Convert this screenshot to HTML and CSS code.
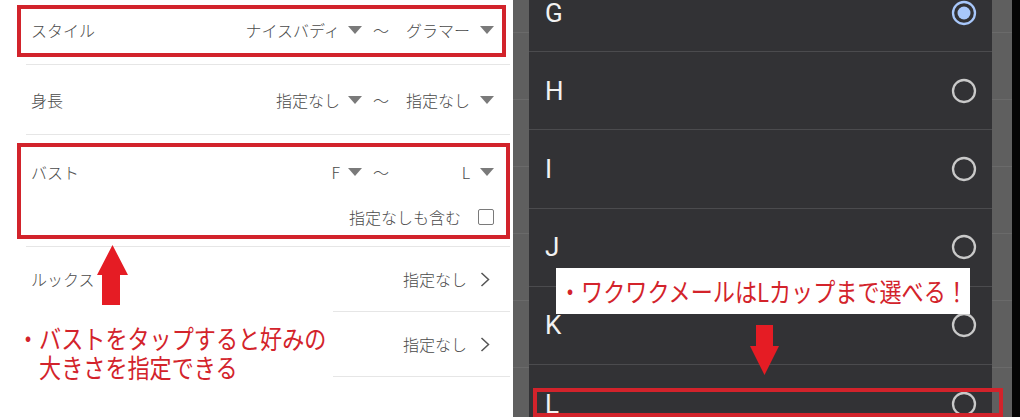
FILE: index.html
```html
<!DOCTYPE html>
<html lang="ja">
<head>
<meta charset="utf-8">
<title>検索条件</title>
<link rel="stylesheet" href="styles.css">
</head>
<body>
<div class="page">
  <section class="left">
    <div class="list">
      <div class="row">
        <span class="label">スタイル</span>
        <div class="range">
          <span class="sel">ナイスバディ<i class="tri"></i></span>
          <span class="tilde">〜</span>
          <span class="sel sel2">グラマー<i class="tri"></i></span>
        </div>
      </div>
      <div class="row">
        <span class="label">身長</span>
        <div class="range">
          <span class="sel">指定なし<i class="tri"></i></span>
          <span class="tilde">〜</span>
          <span class="sel sel2">指定なし<i class="tri"></i></span>
        </div>
      </div>
      <div class="row row-bust">
        <div class="line1">
          <span class="label">バスト</span>
          <div class="range">
            <span class="sel">F<i class="tri"></i></span>
            <span class="tilde">〜</span>
            <span class="sel sel2">L<i class="tri"></i></span>
          </div>
        </div>
        <div class="line2">
          <span class="value">指定なしも含む</span>
          <span class="checkbox"></span>
        </div>
      </div>
      <div class="row row-short">
        <span class="label">ルックス</span>
        <span class="link">指定なし<svg class="chev" viewBox="0 0 10 15" width="10" height="15"><polyline points="1.5,1 8.5,7.5 1.5,14" fill="none" stroke="#555" stroke-width="1.5"/></svg></span>
      </div>
      <div class="row row-short">
        <span class="label"></span>
        <span class="link">指定なし<svg class="chev" viewBox="0 0 10 15" width="10" height="15"><polyline points="1.5,1 8.5,7.5 1.5,14" fill="none" stroke="#555" stroke-width="1.5"/></svg></span>
      </div>
    </div>

    <div class="hl hl-style"></div>
    <div class="hl hl-bust"></div>
    <svg class="arrow-up" viewBox="0 0 31 60" width="31" height="60"><polygon points="15.5,0 31,30 23,30 23,60 5,60 5,30 0,30" fill="#e51c24"/></svg>
    <div class="note-left">
      <span class="note-line">・バストをタップすると好みの</span>
      <span class="note-line">　大きさを指定できる</span>
    </div>
  </section>

  <section class="right">
    <div class="dim"></div>
    <div class="dialog">
      <div class="opt"><span class="opt-label">G</span><svg class="radio" viewBox="0 0 26 26" width="26" height="26"><circle cx="13" cy="13" r="11" fill="none" stroke="#a8c7fa" stroke-width="2.3"/><circle cx="13" cy="13" r="6.5" fill="#a8c7fa"/></svg></div>
      <div class="opt"><span class="opt-label">H</span><svg class="radio" viewBox="0 0 26 26" width="26" height="26"><circle cx="13" cy="13" r="11" fill="none" stroke="#c9c9c9" stroke-width="2.3"/></svg></div>
      <div class="opt"><span class="opt-label">I</span><svg class="radio" viewBox="0 0 26 26" width="26" height="26"><circle cx="13" cy="13" r="11" fill="none" stroke="#c9c9c9" stroke-width="2.3"/></svg></div>
      <div class="opt"><span class="opt-label">J</span><svg class="radio" viewBox="0 0 26 26" width="26" height="26"><circle cx="13" cy="13" r="11" fill="none" stroke="#c9c9c9" stroke-width="2.3"/></svg></div>
      <div class="opt"><span class="opt-label">K</span><svg class="radio" viewBox="0 0 26 26" width="26" height="26"><circle cx="13" cy="13" r="11" fill="none" stroke="#c9c9c9" stroke-width="2.3"/></svg></div>
      <div class="opt"><span class="opt-label">L</span><svg class="radio" viewBox="0 0 26 26" width="26" height="26"><circle cx="13" cy="13" r="11" fill="none" stroke="#c9c9c9" stroke-width="2.3"/></svg></div>
    </div>
    <div class="dim dim-r"></div>
    <div class="edge"></div>

    <div class="note-right"><span class="note-text">・ワクワクメールはLカップまで選べる！</span></div>
    <svg class="arrow-down" viewBox="0 0 29 50" width="29" height="50"><polygon points="6,0 23,0 23,21 29,21 14.5,50 0,21 6,21" fill="#e51c24"/></svg>
    <div class="hl hl-l"></div>
  </section>
</div>
</body>
</html>
```
FILE: styles.css
```css
* { box-sizing: border-box; }

html, body {
  margin: 0;
  padding: 0;
  background: #ffffff;
}

body {
  font-family: "Noto Sans CJK JP", "Noto Sans", sans-serif;
  color: #555;
}

.page {
  display: flex;
  width: 1020px;
  height: 420px;
  overflow: hidden;
}

/* ---------- left settings list ---------- */
.left {
  position: relative;
  width: 513px;
  height: 420px;
  background: #fff;
  overflow: hidden;
  flex: none;
}

.list {
  margin-top: -5px;
  padding-left: 26px;
  padding-right: 3px;
}

.row {
  display: flex;
  align-items: center;
  justify-content: space-between;
  height: 70px;
  border-bottom: 1px solid #e6e6e6;
  padding: 0 16px 0 5px;
  font-size: 16px;
  line-height: 20px;
  font-weight: 300;
}

.row-short { height: 65px; }

.row-bust {
  display: block;
  height: 112px;
  padding-top: 0;
}

.line1 {
  display: flex;
  align-items: center;
  justify-content: space-between;
  height: 74px;
}

.line2 {
  display: flex;
  align-items: center;
  justify-content: flex-end;
  height: 16px;
  gap: 17px;
}

.label { color: #4a4a4a; }

.range {
  display: flex;
  align-items: center;
}

.sel {
  display: inline-flex;
  align-items: center;
  justify-content: flex-end;
  gap: 8px;
  min-width: 94px;
  color: #4a4a4a;
}

.sel2 { gap: 10px; }

.tri {
  display: block;
  width: 0;
  height: 0;
  border-left: 7px solid transparent;
  border-right: 7px solid transparent;
  border-top: 8px solid #7a7a7a;
}

.tilde {
  margin: 0 11px;
  color: #555;
}

.value { color: #4a4a4a; }

.link {
  display: inline-flex;
  align-items: center;
  gap: 13px;
  margin-right: 4px;
  color: #4a4a4a;
}

.chev { display: block; }

.checkbox {
  width: 16px;
  height: 16px;
  border: 1.5px solid #7a7a7a;
  border-radius: 2px;
}

/* ---------- annotations ---------- */
.hl {
  position: absolute;
  border: 4px solid #d2232b;
}

.hl-style { left: 17px; top: 5px; width: 489px; height: 52px; }
.hl-bust { left: 17px; top: 143px; width: 493px; height: 96px; }
.hl-l { left: 20px; top: 388px; width: 470px; height: 29px; }

.arrow-up {
  position: absolute;
  left: 97px;
  top: 245px;
}

.arrow-down {
  position: absolute;
  left: 237px;
  top: 325px;
}

.note-left {
  position: absolute;
  left: 0;
  top: 310px;
  width: 333px;
  height: 82px;
  background: #fff;
  padding: 13px 0 0 17px;
  color: #d3232b;
  font-size: 26px;
  line-height: 29px;
  font-weight: 400;
  white-space: nowrap;
}

.note-line {
  display: block;
  transform: scaleX(0.85);
  transform-origin: left center;
}

.note-right {
  position: absolute;
  left: 43px;
  top: 268px;
  width: 414px;
  height: 46px;
  background: #fff;
  padding-left: 3px;
  display: flex;
  align-items: center;
  color: #d3232b;
  font-size: 26px;
  line-height: 30px;
  font-weight: 400;
  white-space: nowrap;
}

.note-text {
  display: block;
  transform: scaleX(0.85);
  transform-origin: left center;
}

/* ---------- right dialog ---------- */
.right {
  position: relative;
  display: flex;
  width: 507px;
  height: 417px;
  flex: none;
  overflow: hidden;
}

.dim {
  width: 16px;
  flex: none;
  background-color: #5f5f5f;
  background-image: repeating-linear-gradient(to bottom, transparent 0, transparent 66px, #6a6a6a 66px, #6a6a6a 67px);
  background-position: 0 -34px;
}

.dim-r { width: 20px; }

.edge {
  width: 8px;
  flex: none;
  background: #050505;
}

.dialog {
  width: 463px;
  flex: none;
  background: #323235;
}

.opt {
  display: flex;
  align-items: center;
  justify-content: space-between;
  height: 78.2px;
  border-bottom: 1px solid #4b4b4e;
  padding: 0 15px 0 16px;
}

.opt:first-child { margin-top: -26px; }

.opt-label {
  font-family: Roboto, "Noto Sans", sans-serif;
  font-size: 26px;
  line-height: 30px;
  color: #f2f2f2;
}

.radio { display: block; }
```
